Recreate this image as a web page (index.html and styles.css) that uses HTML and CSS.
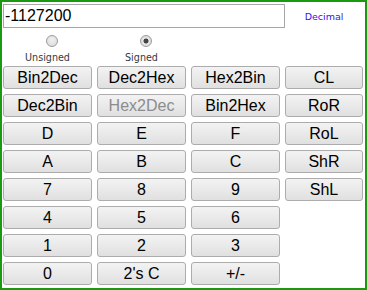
FILE: index.html
```html
<!DOCTYPE html>
<html lang="en">
<head>
    <meta charset="UTF-8">
    <title>Programmer Calculator</title>
    <link rel="stylesheet" href="styles.css">
</head>
<body>

    <div class="calc">
        <div class="top">
            <input type="text" id="display" class="display" value="-1127200">
            <span class="mode" id="mode">Decimal</span>
        </div>

        <div class="signs">
            <label class="sign">
                <input type="radio" name="sign" value="unsigned">
                <span>Unsigned</span>
            </label>
            <label class="sign">
                <input type="radio" name="sign" value="signed" checked>
                <span>Signed</span>
            </label>
        </div>

        <div class="keys">
            <button>Bin2Dec</button>
            <button>Dec2Hex</button>
            <button>Hex2Bin</button>
            <button>CL</button>

            <button>Dec2Bin</button>
            <button disabled>Hex2Dec</button>
            <button>Bin2Hex</button>
            <button>RoR</button>

            <button>D</button>
            <button>E</button>
            <button>F</button>
            <button>RoL</button>

            <button>A</button>
            <button>B</button>
            <button>C</button>
            <button>ShR</button>

            <button>7</button>
            <button>8</button>
            <button>9</button>
            <button>ShL</button>

            <button>4</button>
            <button>5</button>
            <button>6</button>
            <span></span>

            <button>1</button>
            <button>2</button>
            <button>3</button>
            <span></span>

            <button>0</button>
            <button>2's C</button>
            <button>+/-</button>
            <span></span>
        </div>
    </div>

</body>
</html>
```

FILE: styles.css
```css
body {
    margin: 0;
    font-family: "Liberation Sans", Arial, sans-serif;
    background: white;
}
.calc {
    width: 367px;
    height: 290px;
    box-sizing: border-box;
    border: 2px solid #1a9a0e;
    padding: 2px 2px 0 1px;
}
.top {
    display: flex;
    align-items: center;
    height: 24px;
}
.display {
    width: 282px;
    height: 24px;
    box-sizing: border-box;
    margin: 0;
    padding: 0 0 0 1px;
    border: 1px solid #a6a6a6;
    font-family: "Liberation Sans", Arial, sans-serif;
    font-size: 16px;
    color: black;
    outline: none;
}
.mode {
    flex: 1;
    text-align: center;
    font-family: "DejaVu Sans", Verdana, sans-serif;
    font-size: 9.5px;
    color: #3311ee;
}
.signs {
    display: grid;
    grid-template-columns: 89px 89px;
    column-gap: 5px;
    height: 38px;
}
.sign {
    display: flex;
    flex-direction: column;
    align-items: center;
    font-family: "DejaVu Sans", Verdana, sans-serif;
    font-size: 9.6px;
    line-height: 12px;
    color: #333a44;
}
.sign input {
    appearance: none;
    width: 12px;
    height: 12px;
    margin: 7px 0 5px 9px;
    border: 1px solid #9c9c9c;
    border-radius: 50%;
    box-sizing: border-box;
    background: radial-gradient(circle at 50% 40%, #f0f0f0, #d8d8d8);
}
.sign input:checked {
    background: radial-gradient(circle, #444 0, #444 2.2px, #e6e6e6 2.8px, #d6d6d6 100%);
}
.keys {
    display: grid;
    grid-template-columns: 89px 89px 89px 78px;
    grid-auto-rows: 23px;
    gap: 5px;
}
.keys button {
    margin: 0;
    padding: 0;
    border: 1px solid #acacac;
    border-radius: 3px;
    background: linear-gradient(#f3f3f3, #e0e0e0);
    font-family: "Liberation Sans", Arial, sans-serif;
    font-size: 16px;
    color: black;
}
.keys button:disabled {
    color: #8c8c8c;
}
```
